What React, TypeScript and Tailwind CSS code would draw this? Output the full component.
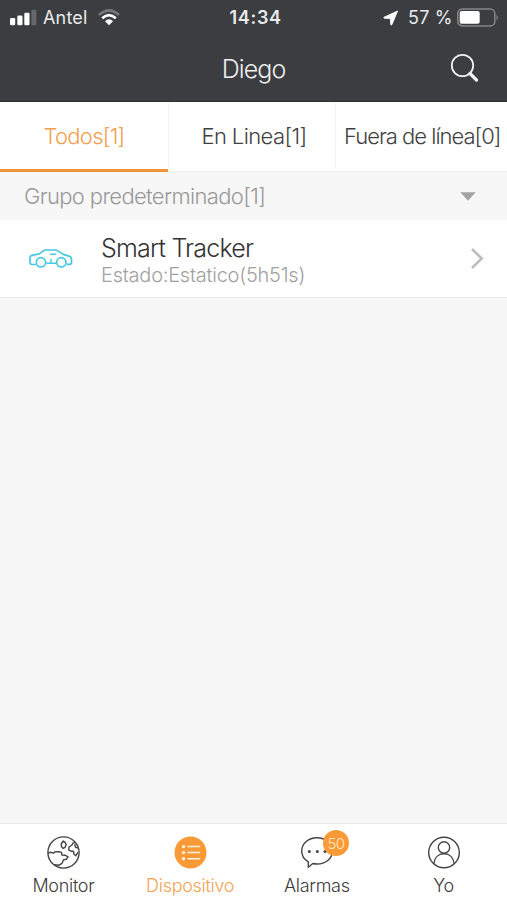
import type { ReactNode } from 'react';

function StatusBar() {
  return (
    <div className="flex h-[35px] items-center text-[18px] leading-none text-[#e9eaec]">
      <div className="flex flex-1 items-center pl-[10px]">
        <svg width="27" height="17" viewBox="0 0 27 17" fill="#fff">
          <rect x="0" y="9" width="5.2" height="7.3" rx="1.3" />
          <rect x="7.3" y="6.6" width="5.2" height="9.7" rx="1.3" />
          <rect x="14.3" y="3.8" width="5.2" height="12.5" rx="1.3" />
          <rect x="21.4" y="0.8" width="5" height="15.5" rx="1.3" fill="#65676b" />
        </svg>
        <span className="ml-[6px] w-[55px] whitespace-nowrap tracking-[0.2px]">Antel</span>
        <svg width="22" height="17" viewBox="0 0 22 17" fill="none" strokeWidth="2.7">
          <path d="M1 6 Q11-3 21 6" stroke="#737579" />
          <path d="M4.2 9.2 Q11 3 17.8 9.2" stroke="#fff" />
          <path d="M7 12.2 Q11 8.5 15 12.2 L11 16.3Z" fill="#fff" stroke="none" />
        </svg>
      </div>
      <span className="w-[50px] whitespace-nowrap font-semibold tracking-[0.7px]">14:34</span>
      <div className="flex flex-1 items-center justify-end pr-[8px]">
        <svg width="16" height="16" viewBox="0 0 16 16" fill="#fff" stroke="#fff" strokeWidth="0.8" strokeLinejoin="round">
          <path d="M14.6 1 L1 7.2 Q0.4 8 1.3 8.3 L7.3 8.6 L7.7 14.6 Q8.1 15.6 8.9 14.7Z" />
        </svg>
        <span className="ml-[9px] w-[49px] whitespace-nowrap tracking-[0.2px]">57 %</span>
        <svg width="42" height="19" viewBox="0 0 42 19">
          <rect x="0.8" y="0.9" width="37" height="17" rx="4.5" fill="none" stroke="#85878a" strokeWidth="1.5" />
          <rect x="2.7" y="3" width="20" height="12.8" rx="2" fill="#fff" />
          <path d="M39.5 6.5 Q42 9.5 39.5 12.5Z" fill="#85878a" />
        </svg>
      </div>
    </div>
  );
}

function TabItem({ label, icon, active = false }: { label: string; icon: ReactNode; active?: boolean }) {
  return (
    <div className={`flex flex-1 flex-col items-center pt-[11px] ${active ? 'text-[#f3a451]' : 'text-[#3c3c3c]'}`}>
      <div className="relative h-[34px] w-[34px]">{icon}</div>
      <span className="mt-[5px] whitespace-nowrap text-[18px] leading-[24px] tracking-[-0.3px]">{label}</span>
    </div>
  );
}

const Globe = (
  <svg width="34" height="34" viewBox="0 0 34 34" fill="none" stroke="#444" strokeWidth="1.4" strokeLinejoin="round">
    <circle cx="17.5" cy="17.5" r="15.6" />
    <path d="M2.2 18 L5 17.3 L7.5 18.2 L9.2 16.8 L13 16.8 L15.5 17.4 L16 20 L19 20.2 L22 21.8 L20.5 24.2 L17.6 24.8 L16 28.3 L13 30.2 L8 29.8" />
    <path d="M17.2 6 L19 7.4 L20.2 9.5 L19 12.4 L17.2 13.4 L15.6 11.8 L15.2 9Z" />
    <path d="M29 7.3 L26.8 8.2 L26 10 L23 12 L22.8 15 L25 16.2 L27.4 16.2 L28 19.3 L29.8 20.7 L32.2 17.2" />
    <path d="M28.8 9 L29.3 12 L32 13.2" />
  </svg>
);

const DeviceList = (
  <svg width="34" height="34" viewBox="0 0 34 34">
    <circle cx="17.5" cy="17.5" r="16" fill="#f99a37" />
    <g fill="#fff2df">
      <circle cx="10.5" cy="11.6" r="1.7" />
      <circle cx="10.5" cy="17.6" r="1.7" />
      <circle cx="10.5" cy="23.7" r="1.7" />
    </g>
    <path d="M15 11.6H26.5M15 17.6H26.5M15 23.7H26.5" stroke="#fff2df" strokeWidth="1.5" strokeLinecap="round" />
  </svg>
);

const Alarm = (
  <>
    <svg width="34" height="34" viewBox="0 0 34 34" fill="none" stroke="#444" strokeWidth="1.4" strokeLinejoin="round">
      <path d="M8.3 26.8 C4.3 24.5 1.7 20.5 1.7 16 C1.7 8.3 8.5 2.8 17 2.8 C25.5 2.8 32.3 8.3 32.3 16 C32.3 24 25.5 29 17 29 C15.1 29 13.9 28.8 12.9 28.5 L8.3 32.3Z" />
      <g fill="#444" stroke="none">
        <circle cx="9.3" cy="16.5" r="1.5" />
        <circle cx="17.3" cy="16.5" r="1.5" />
        <circle cx="25" cy="16.5" r="1.5" />
      </g>
    </svg>
    <span className="absolute left-[23px] top-[-5px] flex h-[26px] w-[26px] items-center justify-center rounded-full bg-[#f99a37] text-[15px] leading-none tracking-[-0.6px] text-[#ffe6c6]">
      50
    </span>
  </>
);

const Person = (
  <svg width="34" height="34" viewBox="0 0 34 34" fill="none" stroke="#444" strokeWidth="1.4">
    <circle cx="17" cy="17.5" r="15.3" />
    <circle cx="17" cy="12.5" r="5.7" />
    <path d="M6.8 28.8 C7.5 22.5 11.4 18.7 17 18.7 C22.6 18.7 26.5 22.5 27.2 28.8" />
  </svg>
);

export default function App() {
  return (
    <div className="flex h-[900px] w-[507px] flex-col overflow-hidden bg-[#f7f7f7] font-['Inter','Liberation_Sans',sans-serif] text-[#414141]">
      <header className="h-[102px] border-b border-[#2e2d32] bg-[#3b3d41]">
        <StatusBar />
        <div className="flex h-[66px] items-center">
          <div className="w-[80px]" />
          <h1 className="flex-1 pt-px text-center text-[25px] font-light leading-[30px] tracking-[-0.9px] text-[#eeeeef]">Diego</h1>
          <div className="flex w-[80px] justify-start pl-[23px]">
            <svg width="30" height="30" viewBox="0 0 30 30" fill="none" stroke="#f0f0f0">
              <circle cx="12.5" cy="12.5" r="10.7" strokeWidth="1.8" />
              <path d="M20 20.5 L26.5 27" strokeWidth="3.2" strokeLinecap="round" />
            </svg>
          </div>
        </div>
      </header>

      <nav className="flex h-[70px] border-b border-[#f0f0f0] bg-white pt-px text-[22px] font-light leading-[66px] tracking-[-0.75px]">
        <div className="h-[69px] w-[168px] border-b-[3px] border-[#f09437] text-center text-[#f2a04d]">Todos[1]</div>
        <div className="h-[65px] w-[168px] border-x border-[#f1f1f1] pl-1 text-center tracking-[-0.6px]">En Linea[1]</div>
        <div className="flex-1 whitespace-nowrap pl-[8px] tracking-[-1px]">Fuera de línea[0]</div>
      </nav>

      <div className="flex h-[48px] items-center justify-between pl-[24px] pr-[31px]">
        <span className="whitespace-nowrap text-[22px] font-light leading-[28px] tracking-[-0.65px] text-[#999]">Grupo predeterminado[1]</span>
        <svg width="16" height="9" viewBox="0 0 16 9" fill="#a3a3a3">
          <path d="M0.3 0.3H15.7L8 8.7Z" />
        </svg>
      </div>

      <div className="flex h-[78px] items-center border-b border-[#eaeaea] bg-white pl-[29px] pr-[23px]">
        <svg width="44" height="20" viewBox="0 0 44 20" fill="none" stroke="#45c9e2" strokeWidth="1.7" strokeLinejoin="round">
          <path d="M6.8 15.5 H3.2 Q1 15.5 1 13.4 V8.4 Q1.2 6.8 3 6.4 L10.3 4.9 L14.7 1.6 Q15.5 1 16.7 1 H26 Q27.5 1 28.8 1.9 L34.3 5.4 L40 7.1 Q42.5 7.9 42.5 10.2 V13.4 Q42.5 15.3 40.5 15.3 H37.5" />
          <circle cx="12" cy="13.3" r="4.7" />
          <circle cx="32.3" cy="13.3" r="4.7" />
          <path d="M17.5 14.3 H27 M21 5.3 H27 M22 9.8 V14.3" strokeWidth="1.4" />
        </svg>
        <div className="ml-[28px] flex-1 whitespace-nowrap pt-[4px]">
          <div className="text-[25px] font-light leading-[28px] tracking-[-0.8px] text-[#333]">Smart Tracker</div>
          <div className="text-[20px] font-light leading-[26px] tracking-[-0.24px] text-[#a1a1a1]">Estado:Estatico(5h51s)</div>
        </div>
        <svg width="14" height="22" viewBox="0 0 14 22" fill="none" stroke="#bdbdbd" strokeWidth="2.6">
          <path d="M2 1 L11.7 10.5 L2 20" />
        </svg>
      </div>

      <main className="flex-1" />

      <footer className="flex h-[77px] border-t border-[#e9e9e9] bg-white font-light">
        <TabItem label="Monitor" icon={Globe} />
        <TabItem label="Dispositivo" icon={DeviceList} active />
        <TabItem label="Alarmas" icon={Alarm} />
        <TabItem label="Yo" icon={Person} />
      </footer>
    </div>
  );
}
